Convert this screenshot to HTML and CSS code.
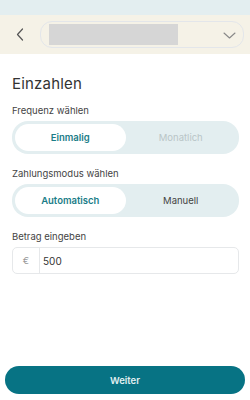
FILE: index.html
```html
<!DOCTYPE html>
<html lang="de">
<head>
<meta charset="utf-8">
<link rel="stylesheet" href="styles.css">
</head>
<body>
<div class="app">
  <div class="statusbar"></div>
  <header class="topbar">
    <button class="back" aria-label="Zurück">
      <svg width="8" height="13" viewBox="0 0 8 13"><path d="M6.5 1 L1.5 6.5 L6.5 12" fill="none" stroke="#555" stroke-width="1.2" stroke-linecap="round" stroke-linejoin="round"/></svg>
    </button>
    <div class="select">
      <div class="placeholder"></div>
      <svg class="chev" width="13" height="7" viewBox="0 0 13 7"><path d="M1 1 L6.5 6 L12 1" fill="none" stroke="#888" stroke-width="1.1" stroke-linecap="round" stroke-linejoin="round"/></svg>
    </div>
  </header>
  <main class="content">
    <h1 class="title">Einzahlen</h1>
    <div class="field">
      <div class="label">Frequenz wählen</div>
      <div class="toggle">
        <div class="opt active">Einmalig</div>
        <div class="opt muted">Monatlich</div>
      </div>
    </div>
    <div class="field">
      <div class="label">Zahlungsmodus wählen</div>
      <div class="toggle">
        <div class="opt active">Automatisch</div>
        <div class="opt">Manuell</div>
      </div>
    </div>
    <div class="field">
      <div class="label">Betrag eingeben</div>
      <div class="input">
        <div class="currency">€</div>
        <div class="value">500</div>
      </div>
    </div>
  </main>
  <footer class="footer">
    <button class="primary">Weiter</button>
  </footer>
</div>
</body>
</html>
```
FILE: styles.css
```css
* { box-sizing: border-box; }
html, body { margin: 0; padding: 0; }
body {
  font-family: "Inter", "Open Sans", sans-serif;
  background: #ffffff;
  color: #3a3a3a;
}
.app {
  width: 250px;
  height: 400px;
  display: flex;
  flex-direction: column;
}
.statusbar {
  height: 15px;
  background: #e3eef0;
}
.topbar {
  height: 39px;
  background: #f5f2e7;
  display: flex;
  align-items: center;
  padding: 0 6px 0 12px;
}
.back {
  width: 28px;
  height: 27px;
  padding: 0 0 0 4px;
  border: 0;
  background: transparent;
  display: flex;
  align-items: center;
  justify-content: flex-start;
}
.select {
  flex: 1;
  height: 27px;
  border: 1.5px solid #e3e6ea;
  border-radius: 12px;
  display: flex;
  align-items: center;
  padding: 0 7px 0 8px;
}
.placeholder {
  width: 129px;
  height: 21px;
  background: #d6d6d6;
}
.chev { margin-left: auto; margin-top: 1px; }
.content {
  padding: 0 11px 0 12px;
  display: flex;
  flex-direction: column;
}
.title {
  margin: 21px 0 0 0;
  font-size: 15px;
  font-weight: 400;
  line-height: 18px;
  color: #333;
  letter-spacing: 0.2px;
}
.field { display: flex; flex-direction: column; }
.label {
  font-size: 9.5px;
  line-height: 12px;
  color: #444;
  margin-top: 12px;
  margin-bottom: 4px;
}
.field + .field .label { margin-top: 14px; }
.toggle {
  height: 33px;
  background: #e3eef0;
  border-radius: 16px;
  display: flex;
  align-items: center;
  padding: 3px;
}
.opt {
  flex: 1;
  height: 27px;
  display: flex;
  align-items: center;
  justify-content: center;
  font-size: 9.5px;
  color: #444;
}
.opt.active {
  background: #ffffff;
  border-radius: 14px;
  color: #1a7d88;
  font-weight: 600;
}
.opt.muted { color: #b9c5c7; }
.input {
  height: 27px;
  border: 1px solid #e6e8ea;
  border-radius: 5px;
  display: flex;
  align-items: stretch;
}
.currency {
  width: 27px;
  border-right: 1px solid #e6e8ea;
  display: flex;
  align-items: center;
  justify-content: center;
  font-size: 9.5px;
  color: #999;
}
.value {
  display: flex;
  align-items: center;
  padding-left: 3px;
  font-size: 10px;
  color: #333;
}
.footer {
  margin-top: auto;
  padding: 0 5px 6px 5px;
}
.primary {
  width: 100%;
  height: 28px;
  border: 0;
  border-radius: 14px;
  background: #077384;
  color: #e3f0f2;
  font-family: inherit;
  font-size: 9.5px;
  font-weight: 600;
}
```
